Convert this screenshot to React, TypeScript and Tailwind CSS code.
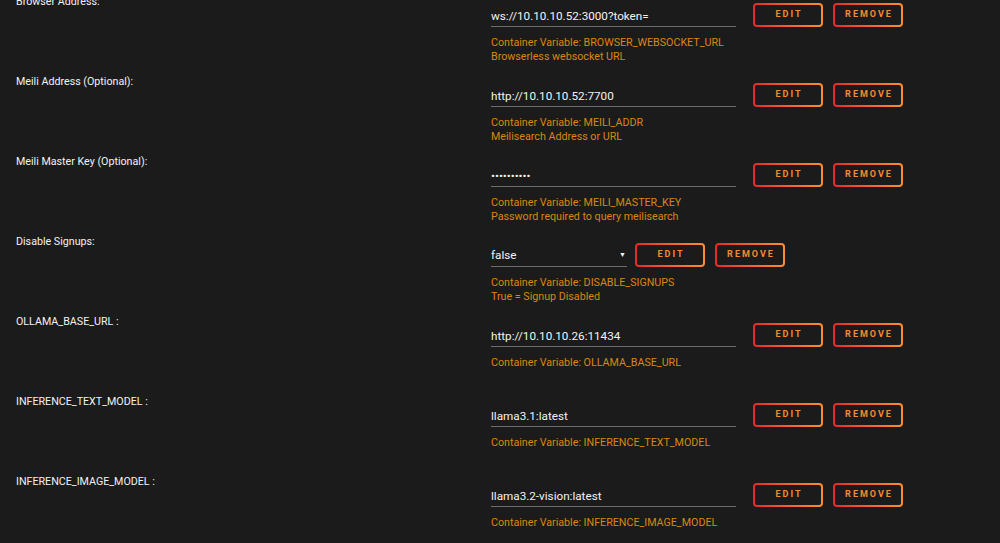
import { useState } from "react"

type Variable = {
  label: string
  value: string
  kind: "text" | "password" | "select"
  lines: string[]
}

const variables: Variable[] = [
  {
    label: "Browser Address:",
    value: "ws://10.10.10.52:3000?token=",
    kind: "text",
    lines: ["Container Variable: BROWSER_WEBSOCKET_URL", "Browserless websocket URL"],
  },
  {
    label: "Meili Address (Optional):",
    value: "http://10.10.10.52:7700",
    kind: "text",
    lines: ["Container Variable: MEILI_ADDR", "Meilisearch Address or URL"],
  },
  {
    label: "Meili Master Key (Optional):",
    value: "xxxxxxxxxx",
    kind: "password",
    lines: ["Container Variable: MEILI_MASTER_KEY", "Password required to query meilisearch"],
  },
  {
    label: "Disable Signups:",
    value: "false",
    kind: "select",
    lines: ["Container Variable: DISABLE_SIGNUPS", "True = Signup Disabled"],
  },
  {
    label: "OLLAMA_BASE_URL :",
    value: "http://10.10.10.26:11434",
    kind: "text",
    lines: ["Container Variable: OLLAMA_BASE_URL"],
  },
  {
    label: "INFERENCE_TEXT_MODEL :",
    value: "llama3.1:latest",
    kind: "text",
    lines: ["Container Variable: INFERENCE_TEXT_MODEL"],
  },
  {
    label: "INFERENCE_IMAGE_MODEL :",
    value: "llama3.2-vision:latest",
    kind: "text",
    lines: ["Container Variable: INFERENCE_IMAGE_MODEL"],
  },
]

function OutlineButton({ children }: { children: string }) {
  return (
    <button className="block h-[24px] w-[70px] shrink-0 rounded-[4px] bg-linear-to-r from-[#e22828] to-[#ff8c2f] p-[2px]">
      <span className="flex h-full w-full items-center justify-center rounded-[2px] bg-[#1c1b1b] pl-[2px] text-[9px] font-bold tracking-[2px] text-[#f88a2d]">
        {children}
      </span>
    </button>
  )
}

export default function App() {
  const [values, setValues] = useState(variables.map((v) => v.value))

  const update = (i: number, value: string) => setValues(values.map((x, j) => (j === i ? value : x)))

  return (
    <div
      className="min-h-screen overflow-hidden bg-[#1c1b1b] text-[#f2f2f2]"
      style={{ fontFamily: "Roboto, 'Liberation Sans', sans-serif" }}
    >
      {/* Template variables */}
      <div className="-mt-[4px] flex flex-col">
        {variables.map((v, i) => (
          <div key={v.label} className="flex h-[80px]">
            <div className="w-[491px] shrink-0 pl-4 text-[10.7px] leading-[12px]">{v.label}</div>
            <div className="flex flex-col pt-[7px]">
              <div className="flex items-end">
                {v.kind === "select" ? (
                  <div className="relative mr-[8px] w-[136px]">
                    <select
                      value={values[i]}
                      onChange={(e) => update(i, e.target.value)}
                      className="block h-[24px] w-full appearance-none border-b border-[#6b6b6b] bg-transparent p-0 pt-[2px] text-[11.7px] text-[#f2f2f2] outline-none"
                    >
                      <option value="false">false</option>
                      <option value="true">true</option>
                    </select>
                    <span className="pointer-events-none absolute right-[1px] top-[9px] text-[7px] leading-none text-[#f2f2f2]">
                      ▼
                    </span>
                  </div>
                ) : (
                  <input
                    type={v.kind === "password" ? "password" : "text"}
                    value={values[i]}
                    onChange={(e) => update(i, e.target.value)}
                    className="mr-[17px] block h-[24px] w-[245px] border-b border-[#6b6b6b] bg-transparent p-0 pt-[2px] text-[11.7px] text-[#f2f2f2] outline-none"
                  />
                )}
                <div className="flex gap-[10px]">
                  <OutlineButton>EDIT</OutlineButton>
                  <OutlineButton>REMOVE</OutlineButton>
                </div>
              </div>
              <div className="mt-[9px] text-[10.7px] leading-[14px] text-[#d9870f]">
                {v.lines.map((line) => (
                  <div key={line}>{line}</div>
                ))}
              </div>
            </div>
          </div>
        ))}
      </div>
    </div>
  )
}
